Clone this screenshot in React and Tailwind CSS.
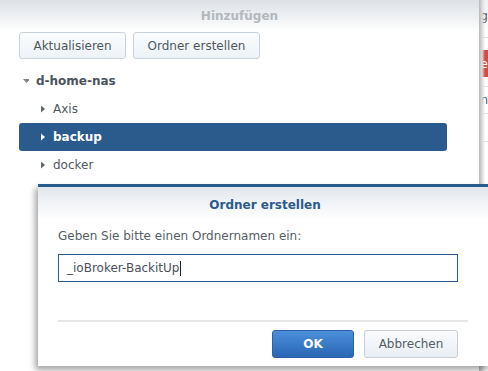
import { useState } from "react";

const font = { fontFamily: '"DejaVu Sans", Verdana, sans-serif' };

function Caret({ dir = "right", className = "" }) {
  return (
    <svg width="6" height="8" viewBox="0 0 6 8" className={className}>
      {dir === "right" ? (
        <path d="M1 0.5 L5 4 L1 7.5 Z" fill="currentColor" />
      ) : (
        <path d="M0 2 L7 2 L3.5 6 Z" fill="currentColor" />
      )}
    </svg>
  );
}

function TreeRow({ label, selected }) {
  return (
    <div
      className={
        "flex h-[28px] items-center rounded-[3px] pl-[21px] " +
        (selected ? "bg-[#2b5a8c] text-white font-bold" : "text-[#4f5861]")
      }
    >
      <Caret className={selected ? "text-white" : "text-[#5b636b]"} />
      <span className="ml-[7px]">{label}</span>
    </div>
  );
}

export default function App() {
  const [name, setName] = useState("_ioBroker-BackitUp");

  return (
    <div
      className="relative h-[371px] w-[488px] overflow-hidden bg-white text-[12px] leading-[16px]"
      style={font}
    >
      <div className="flex h-full">
        {/* Hinzufügen panel */}
        <div className="flex h-full w-[479px] shrink-0 flex-col bg-white">
          <div className="flex h-[32px] items-center justify-center bg-gradient-to-b from-[#dce1e7] to-white font-bold text-[#b3b8be]">
            Hinzufügen
          </div>
          <div className="flex gap-[7px] px-[19px]">
            <button className="h-[27px] w-[107px] rounded-[3px] border border-[#c8d2dc] bg-gradient-to-b from-[#fafcfe] to-[#eef3f8] text-[#4f5861]">
              Aktualisieren
            </button>
            <button className="h-[27px] w-[127px] rounded-[3px] border border-[#c8d2dc] bg-gradient-to-b from-[#fafcfe] to-[#eef3f8] text-[#4f5861]">
              Ordner erstellen
            </button>
          </div>
          <div className="mt-[8px] w-[428px] pl-[19px] box-content">
            <div className="flex h-[28px] items-center pl-[4px] font-bold text-[#4b545d]">
              <Caret dir="down" className="text-[#7b838b]" />
              <span className="ml-[7px]">d-home-nas</span>
            </div>
            <TreeRow label="Axis" />
            <TreeRow label="backup" selected />
            <TreeRow label="docker" />
          </div>
        </div>

        {/* page behind, right edge */}
        <div className="flex h-full flex-1 justify-end overflow-hidden bg-white">
          <div className="flex w-[20px] shrink-0 flex-col">
            <div className="flex h-[37px] items-center justify-end bg-gradient-to-b from-[#eef0f3] to-white pb-[5px] text-[#555]">
              <span>ng</span>
            </div>
            <div className="h-px bg-[#dedede]" />
            <div className="mt-[12px] flex h-[27px] items-center justify-end bg-[#d44a3b] text-white">
              <span>se</span>
            </div>
            <div className="mt-[9px] h-px bg-[#e2e2e2]" />
            <div className="flex h-[26px] items-center justify-end text-[#3f5d82]">
              <span>en</span>
            </div>
            <div className="h-px bg-[#e2e2e2]" />
            <div className="h-[27px]" />
            <div className="h-px bg-[#e2e2e2]" />
          </div>
        </div>
      </div>

      {/* shadow edge of the panel */}
      <div className="pointer-events-none absolute left-[479px] top-0 h-full w-[6px] bg-gradient-to-r from-[#b8b8b8] via-[#dadada] to-transparent" />

      {/* Ordner erstellen dialog */}
      <div className="absolute left-[38px] top-[184px] flex h-[182px] w-[454px] flex-col border-t-[3px] border-[#2b5a8c] bg-white shadow-[-3px_4px_6px_rgba(0,0,0,0.35)]">
        <div className="flex h-[33px] items-center justify-center bg-gradient-to-b from-[#e2e7ee] to-white pt-[2px] font-bold text-[#2b5a8c]">
          Ordner erstellen
        </div>
        <div className="flex flex-col px-[20px]">
          <div className="mt-[8px] text-[#555d65]">
            Geben Sie bitte einen Ordnernamen ein:
          </div>
          <div className="mt-[10px] flex h-[28px] w-[400px] items-center border border-[#2b5a8c] pl-[8px] text-[#4a5158]">
            <span>{name}</span>
            <span className="ml-px h-[15px] w-px bg-[#222]" />
          </div>
          <div className="mt-[38px] h-[2px] w-[410px] bg-[#e6e6e6]" />
          <div className="mt-[8px] flex w-[400px] justify-end gap-[10px]">
            <button
              onClick={() => setName(name)}
              className="h-[28px] w-[82px] rounded-[3px] border border-[#2a62a8] bg-gradient-to-b from-[#4c8fdb] to-[#2a66b4] font-bold text-white"
            >
              OK
            </button>
            <button className="h-[28px] w-[94px] rounded-[3px] border border-[#c6cdd6] bg-gradient-to-b from-[#fafbfd] to-[#e9eef4] text-[#555d65]">
              Abbrechen
            </button>
          </div>
        </div>
      </div>
    </div>
  );
}
